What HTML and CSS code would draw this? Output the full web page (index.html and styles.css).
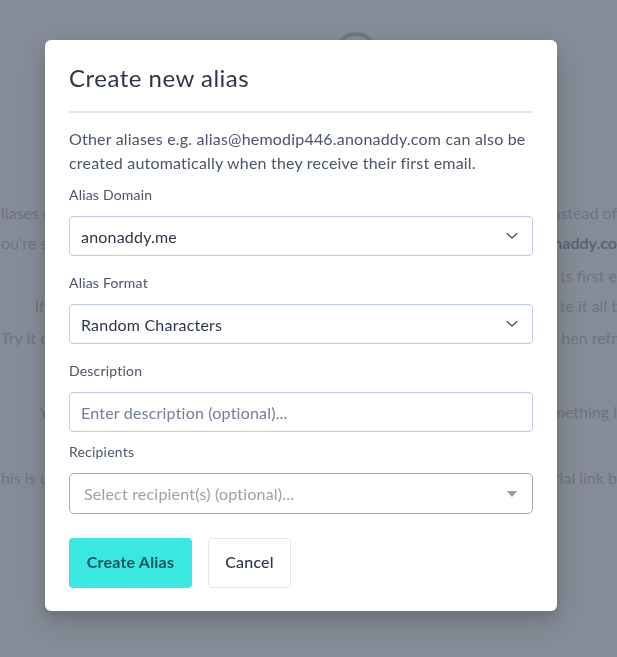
FILE: index.html
```html
<!DOCTYPE html>
<html lang="en">
<head>
<meta charset="utf-8">
<title>Create new alias</title>
<link rel="stylesheet" href="styles.css">
</head>
<body>
<div class="page">
  <div class="avatar-row">
    <svg class="avatar" width="48" height="48" viewBox="0 0 48 48"><circle cx="24" cy="24" r="20" fill="none" stroke="#6f7683" stroke-width="4"/></svg>
  </div>
  <div class="bg-lines">
    <div class="bg-line"><span class="bg-left">liases c</span><span class="bg-right">nstead of</span></div>
    <div class="bg-line"><span class="bg-left">ou're si</span><span class="bg-right"><b>naddy.co</b></span></div>
    <div class="bg-line"><span class="bg-left"></span><span class="bg-right">ts first e</span></div>
    <div class="bg-line"><span class="bg-left end">If y</span><span class="bg-right">te it all t</span></div>
    <div class="bg-line"><span class="bg-left">Try it c</span><span class="bg-right">hen refr</span></div>
    <div class="bg-line"><span class="bg-left end">Yo</span><span class="bg-right">mething l</span></div>
    <div class="bg-line"><span class="bg-left">his is us</span><span class="bg-right">tial link b</span></div>
  </div>
</div>

<div class="overlay">
  <div class="modal">
    <h2 class="modal-title">Create new alias</h2>
    <div class="divider"></div>
    <p class="intro">Other aliases e.g. alias@hemodip446.anonaddy.com can also be created automatically when they receive their first email.</p>

    <label class="field-label">Alias Domain</label>
    <div class="select">
      <span class="select-value">anonaddy.me</span>
      <svg class="chevron" width="12" height="8" viewBox="0 0 12 8"><path d="M1 1.5 L6 6 L11 1.5" fill="none" stroke="#4a5568" stroke-width="1.4" stroke-linecap="round" stroke-linejoin="round"/></svg>
    </div>

    <label class="field-label">Alias Format</label>
    <div class="select">
      <span class="select-value">Random Characters</span>
      <svg class="chevron" width="12" height="8" viewBox="0 0 12 8"><path d="M1 1.5 L6 6 L11 1.5" fill="none" stroke="#4a5568" stroke-width="1.4" stroke-linecap="round" stroke-linejoin="round"/></svg>
    </div>

    <label class="field-label">Description</label>
    <div class="text-input"><span class="placeholder">Enter description (optional)...</span></div>

    <label class="field-label">Recipients</label>
    <div class="multiselect">
      <span class="ms-placeholder">Select recipient(s) (optional)...</span>
      <svg class="caret" width="10" height="6" viewBox="0 0 10 6"><path d="M0 0 H10 L5 6 Z" fill="#999999"/></svg>
    </div>

    <div class="actions">
      <button class="btn btn-primary">Create Alias</button>
      <button class="btn btn-secondary">Cancel</button>
    </div>
  </div>
</div>
</body>
</html>
```

FILE: styles.css
```css
* { box-sizing: border-box; }
html, body { margin: 0; padding: 0; }
body {
  width: 617px;
  height: 657px;
  overflow: hidden;
  background: #858c97;
  font-family: Lato, "Open Sans", sans-serif;
  color: #2d3748;
}
.page {
  height: 657px;
  display: flex;
  flex-direction: column;
}
.avatar-row {
  display: flex;
  justify-content: center;
  padding-top: 30px;
  padding-left: 95px;
}
.bg-lines {
  margin-top: 119px;
  display: grid;
  grid-template-rows: 30px 33px 30px 32px 74px 66px 32px;
  color: #6d7480;
  font-size: 16px;
  line-height: 32px;
}
.bg-line {
  display: flex;
  justify-content: space-between;
  align-items: flex-start;
  white-space: nowrap;
}
.bg-left {
  width: 56px;
  display: flex;
  justify-content: flex-start;
  padding-left: 1px;
}
.bg-left.end {
  justify-content: flex-end;
  padding-left: 0;
}
.bg-right {
  width: 70px;
  display: flex;
  justify-content: flex-end;
}
.bg-right b { color: #5c6370; }

.overlay {
  position: fixed;
  inset: 0;
  display: flex;
  justify-content: center;
  align-items: flex-start;
  padding: 40px 15px 0 0;
}
.modal {
  width: 512px;
  background: #ffffff;
  border-radius: 6px;
  padding: 22px 24px 23px;
  box-shadow: 0 10px 25px rgba(0, 0, 0, 0.18), 0 4px 8px rgba(0, 0, 0, 0.08);
  letter-spacing: 0.2px;
}
.modal-title {
  margin: 0;
  font-size: 24px;
  line-height: 32px;
  font-weight: 400;
  letter-spacing: 0.5px;
  color: #2d3748;
}
.divider {
  height: 2px;
  background: #e2e8f0;
  margin-top: 17px;
}
.intro {
  margin: 14px 0 10px;
  font-size: 16px;
  line-height: 24px;
  color: #4a5568;
}
.field-label {
  display: block;
  font-size: 14px;
  line-height: 20px;
  color: #4a5568;
  margin-bottom: 11px;
}
.select, .text-input {
  height: 40px;
  border: 1px solid #bccbe0;
  border-radius: 4px;
  display: flex;
  align-items: center;
  justify-content: space-between;
  padding: 0 14px 0 11px;
  margin-bottom: 17px;
}
.select-value {
  font-size: 16px;
  color: #2d3748;
}
.chevron { display: block; }
.text-input { margin-bottom: 10px; }
.placeholder {
  font-size: 16px;
  color: #718096;
}
.multiselect {
  height: 41px;
  border: 1px solid #a5adb8;
  border-radius: 5px;
  display: flex;
  align-items: center;
  justify-content: space-between;
  padding: 0 15px 0 14px;
}
.ms-placeholder {
  font-size: 16px;
  color: #9ba2ab;
}
.caret { display: block; }
.actions {
  display: flex;
  gap: 16px;
  margin-top: 24px;
}
.btn {
  height: 50px;
  border-radius: 4px;
  padding: 0 0 3px;
  font-family: inherit;
  font-size: 16px;
  font-weight: 700;
  letter-spacing: 0.2px;
  cursor: pointer;
}
.btn-primary {
  width: 123px;
  background: #3ae7e1;
  border: none;
  color: #17545e;
}
.btn-secondary {
  width: 83px;
  background: #ffffff;
  border: 1px solid #e2e8f0;
  color: #2d3748;
  font-weight: 500;
}
```
